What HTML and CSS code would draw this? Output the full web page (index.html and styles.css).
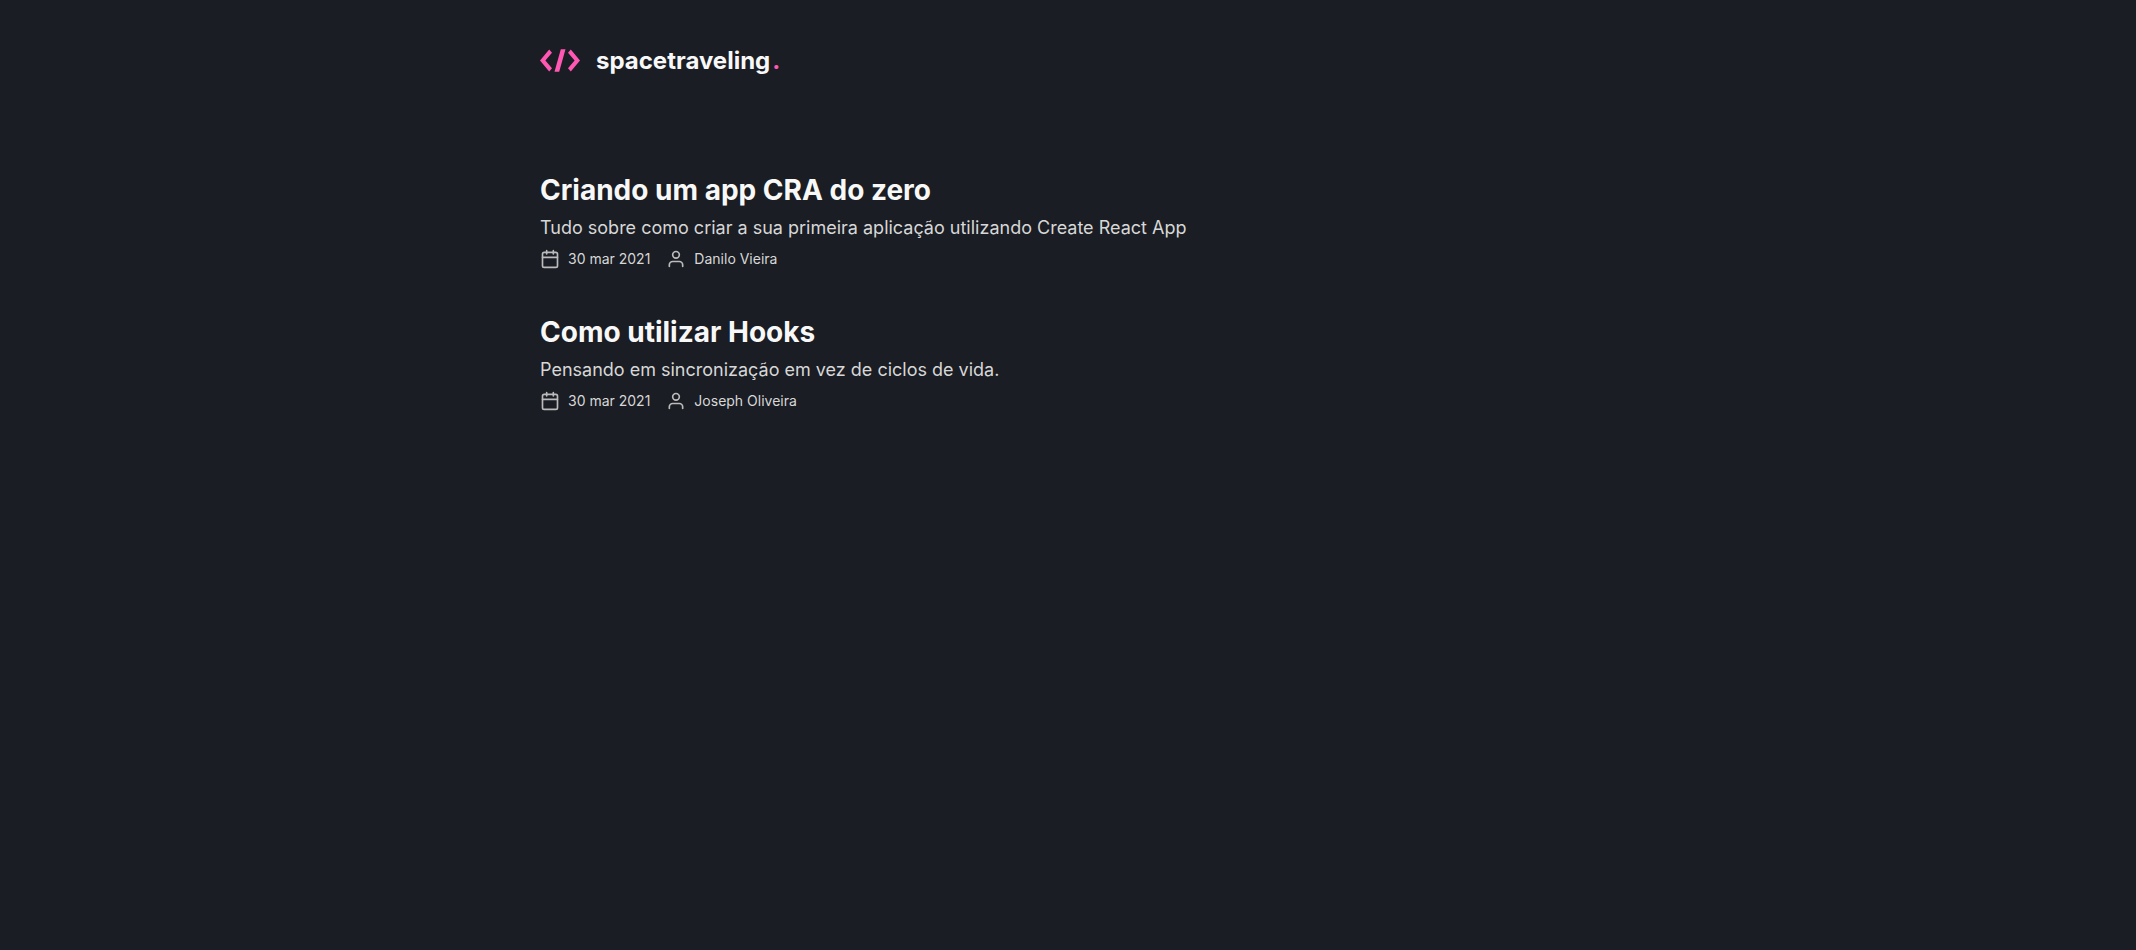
FILE: index.html
```html
<!DOCTYPE html>
<html lang="pt-BR">
<head>
<meta charset="utf-8">
<meta name="viewport" content="width=device-width, initial-scale=1">
<title>Home | spacetraveling</title>
<link rel="stylesheet" href="styles.css">
</head>
<body>
<svg class="sprite" aria-hidden="true">
  <symbol id="calendar" viewBox="0 0 24 24"><rect x="3" y="4" width="18" height="18" rx="2"/><path d="M16 2v4M8 2v4M3 10h18"/></symbol>
  <symbol id="user" viewBox="0 0 24 24"><path d="M20 21v-2a4 4 0 0 0-4-4H8a4 4 0 0 0-4 4v2"/><circle cx="12" cy="7" r="4"/></symbol>
</svg>
<header class="header">
  <a class="logo" href="/" aria-label="spacetraveling">
    <svg class="logo-mark" viewBox="0 0 40 24" aria-hidden="true"><path d="M9.200 0.500L12 3.800L5.400 11.500L12 19.200L9.200 22.500L0 11.500ZM30.800 0.500L28 3.800L34.600 11.500L28 19.200L30.800 22.500L40 11.500ZM20.800 0.300H25.500L19.200 22.700H14.500Z"/></svg>
    <span class="logo-name">spacetraveling<span class="dot">.</span></span>
  </a>
</header>
<main class="posts">
  <a class="post" href="/post/criando-um-app-cra-do-zero">
    <h1 class="title">Criando um app CRA do zero</h1>
    <p class="subtitle">Tudo sobre como criar a sua primeira aplicação utilizando Create React App</p>
    <div class="info">
      <span class="meta"><svg class="icon" aria-hidden="true"><use href="#calendar"/></svg><time datetime="2021-03-30">30 mar 2021</time></span>
      <span class="meta"><svg class="icon" aria-hidden="true"><use href="#user"/></svg>Danilo Vieira</span>
    </div>
  </a>
  <a class="post" href="/post/como-utilizar-hooks">
    <h1 class="title">Como utilizar Hooks</h1>
    <p class="subtitle">Pensando em sincronização em vez de ciclos de vida.</p>
    <div class="info">
      <span class="meta"><svg class="icon" aria-hidden="true"><use href="#calendar"/></svg><time datetime="2021-03-30">30 mar 2021</time></span>
      <span class="meta"><svg class="icon" aria-hidden="true"><use href="#user"/></svg>Joseph Oliveira</span>
    </div>
  </a>
</main>
</body>
</html>
```
FILE: styles.css
```css
* { box-sizing: border-box; margin: 0; padding: 0; }
body { background: #1a1d23; color: #d7d7d7; font-family: Inter, sans-serif; padding: 0 32px; }
a { color: inherit; text-decoration: none; }
.sprite { display: none; }
.header, .posts { max-width: 1056px; margin: 0 auto; }
.header { padding: 46px 0 44px; }
.logo { display: inline-flex; align-items: center; gap: 16px; }
.logo-mark { width: 40px; height: 24px; fill: #ff57b2; }
.logo-name { color: #f8f8f8; font-size: 24px; font-weight: 700; line-height: 30px; }
.dot { color: #ff57b2; margin-left: 2px; }
.posts { display: flex; flex-direction: column; gap: 42px; padding-top: 50px; }
.title { color: #f8f8f8; font-size: 28px; font-weight: 700; line-height: 38px; }
.subtitle { font-size: 18px; line-height: 26px; margin-top: 6px; }
.info { display: flex; gap: 16px; margin-top: 6px; font-size: 14px; }
.meta { display: flex; align-items: center; gap: 8px; line-height: 24px; }
.icon { width: 20px; height: 20px; fill: none; stroke: #bbbbbb; stroke-width: 2; stroke-linecap: round; stroke-linejoin: round; }
```
